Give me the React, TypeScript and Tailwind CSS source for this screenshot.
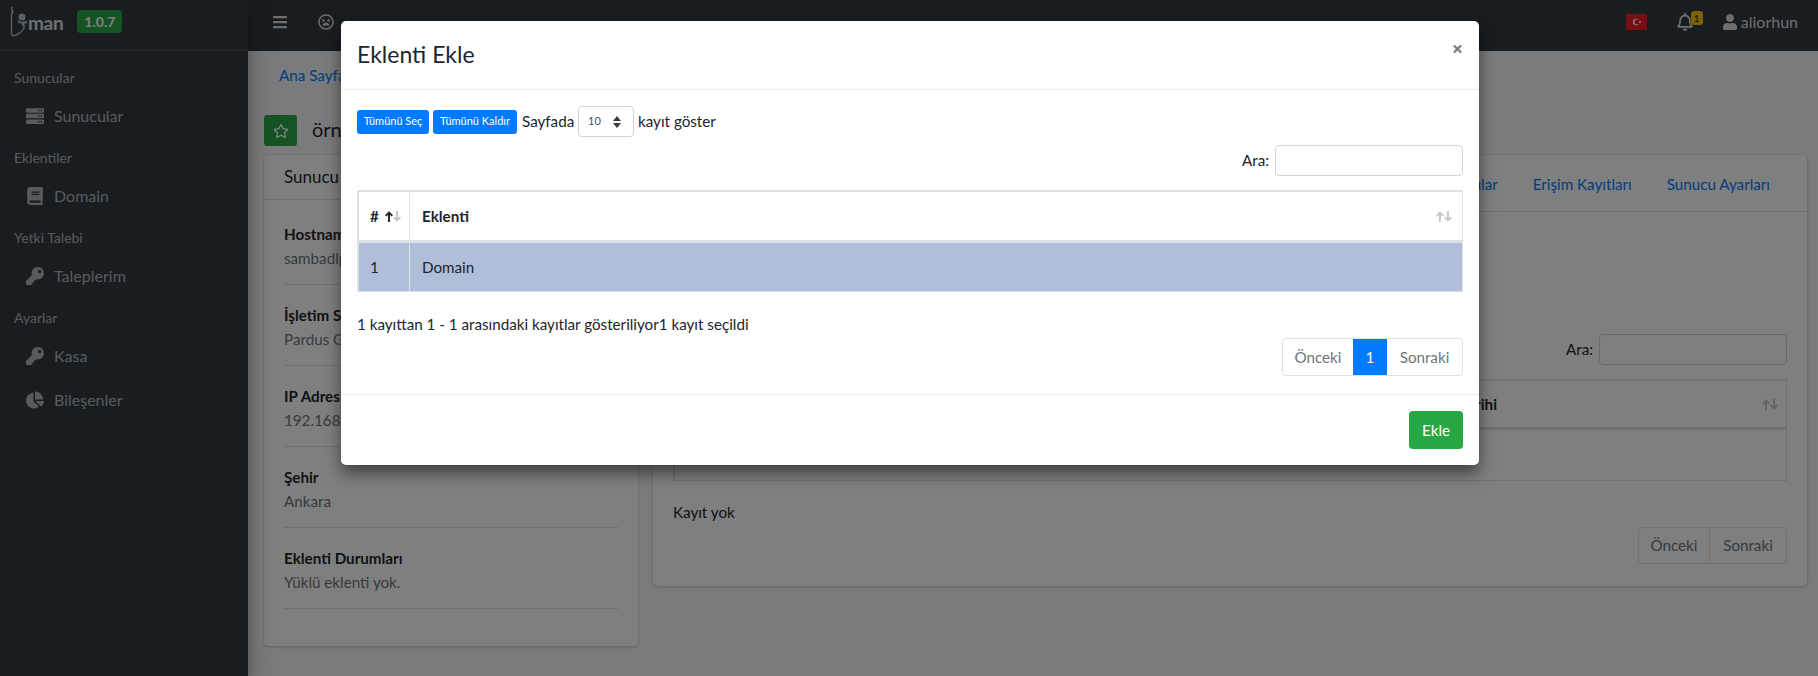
import { FaBars, FaBook, FaChartPie, FaKey, FaRegBell, FaRegStar, FaRegTired, FaServer, FaTimes, FaUser } from "react-icons/fa"
import type { ReactNode } from "react"

const infoRows = [
    { label: "Hostname", value: "sambadlp" },
    { label: "İşletim Sistemi", value: "Pardus GNU/Linux" },
    { label: "IP Adresi", value: "192.168.1.10" },
    { label: "Şehir", value: "Ankara" },
    { label: "Eklenti Durumları", value: "Yüklü eklenti yok." },
]

function SortArrows({ active }: { active?: boolean }) {
    return (
        <svg className="w-[16px] h-[11px] flex-none" viewBox="0 0 16 11" fill="none" strokeWidth="1.9">
            <path d="M4 11V1.500M0.700 4.800 4 1.500 7.300 4.800" stroke={active ? "#212529" : "#c4c6c8"} />
            <path d="M12 0v9.500M8.700 6.200 12 9.500l3.300-3.300" stroke="#c4c6c8" />
        </svg>
    )
}

function NavHeader({ children }: { children: ReactNode }) {
    return <div className="h-[38px] pl-[14px] flex items-center text-[14px] text-[#b0b5bd]">{children}</div>
}

function NavItem({ icon, children }: { icon: ReactNode; children: ReactNode }) {
    return (
        <div className="h-[40px] mb-[2px] pl-[26px] flex items-center text-[16px] text-[#b0b5bd]">
            <span className="w-[28px] text-[18px] flex-none">{icon}</span>
            {children}
        </div>
    )
}

function Pager({ children, width, current }: { children: ReactNode; width: string; current?: boolean }) {
    return (
        <span className={`${width} flex items-center justify-center ${current ? "bg-[#007bff] text-white" : "text-[#6c757d]"}`}>
            {children}
        </span>
    )
}

export default function App() {
    return (
        <div className="relative h-[676px] w-full overflow-hidden flex bg-[#f4f6f9] text-[15.2px] text-[#212529] font-['Lato','Noto_Sans',sans-serif]">
            <aside className="relative z-10 w-[248px] flex-none bg-[#343a40] shadow-[0_14px_28px_rgba(0,0,0,0.25),0_10px_10px_rgba(0,0,0,0.22)]">
                <div className="h-[51px] border-b border-[#4b545c] flex items-center">
                    <svg className="w-[30px] h-[50px] flex-none text-[#b8bcc0]" viewBox="0 0 30 50" fill="none" stroke="currentColor" strokeWidth="1.400">
                        <path d="M13 7c-2 1-2 4 0 4.500-1 1-1.500 2-1.500 3.500V34c0 1.500 1.500 2 3 1.500 5-1.500 8-4 10-8.500" />
                        <circle cx="22" cy="17" r="3.500" fill="currentColor" stroke="none" />
                        <path d="M18 21c2 2 6 2 9 1M22 22c1 2 2 3 2 5" strokeWidth="2" />
                    </svg>
                    <span className="ml-[-2px] mb-[4px] text-[19px] tracking-[-0.3px] font-bold text-[#e0e0e0]">man</span>
                    <span className="ml-[14px] mb-[7px] h-[23px] w-[45px] rounded-[4px] bg-[#28a745] flex items-center justify-center text-[14px] font-bold text-white">1.0.7</span>
                </div>
                <nav className="pt-[7px]">
                    <NavHeader>Sunucular</NavHeader>
                    <NavItem icon={<FaServer />}>Sunucular</NavItem>
                    <NavHeader>Eklentiler</NavHeader>
                    <NavItem icon={<FaBook />}>Domain</NavItem>
                    <NavHeader>Yetki Talebi</NavHeader>
                    <NavItem icon={<FaKey />}>Taleplerim</NavItem>
                    <NavHeader>Ayarlar</NavHeader>
                    <NavItem icon={<FaKey />}>Kasa</NavItem>
                    <div className="pt-[2px]">
                        <NavItem icon={<FaChartPie />}>Bileşenler</NavItem>
                    </div>
                </nav>
            </aside>

            <main className="flex-auto min-w-0 flex flex-col">
                <header className="h-[51px] pb-[8px] flex-none bg-[#343a40] flex items-center text-[#dcdcdc]">
                    <FaBars className="ml-[24px] w-[16px] h-[16px]" />
                    <FaRegTired className="ml-[30px] w-[16px] h-[16px]" />
                    <div className="ml-auto flex items-center">
                        <svg className="w-[21px] h-[16px]" viewBox="0 0 21 16">
                            <rect width="21" height="16" fill="#f01c24" />
                            <circle cx="10" cy="8" r="3.200" fill="#ffffff" />
                            <circle cx="11" cy="8" r="2.500" fill="#f01c24" />
                            <circle cx="14" cy="8" r="1" fill="#ffffff" />
                        </svg>
                        <div className="relative ml-[30px]">
                            <FaRegBell className="w-[16px] h-[18px]" />
                            <span className="absolute left-[14px] top-[-2px] w-[12px] h-[14px] rounded-[3px] bg-[#ffc107] text-[10px] leading-[14px] text-center text-[#212529]">1</span>
                        </div>
                        <FaUser className="ml-[30px] w-[14px] h-[16px]" />
                        <span className="ml-[4px] mr-[20px] text-[16px]">aliorhun</span>
                    </div>
                </header>

                <div className="flex-auto pl-[16px] pr-[11px]">
                    <div className="h-[49px] pl-[15px] pb-[1px] flex items-center text-[#007bff]">Ana Sayfa</div>
                    <div className="mt-[15px] h-[40px] flex items-start">
                        <span className="w-[33px] h-[31px] rounded-[3px] bg-[#28a745] text-white flex items-center justify-center text-[16px]">
                            <FaRegStar />
                        </span>
                        <span className="ml-[15px] text-[20px] leading-[28px]">örnek</span>
                    </div>
                    <div className="flex items-start gap-[15px]">
                        <section className="w-[374px] h-[491px] flex-none bg-white rounded-[4px] shadow-[0_0_1px_rgba(0,0,0,0.13),0_1px_3px_rgba(0,0,0,0.2)]">
                            <div className="h-[45px] pl-[20px] flex items-center border-b border-[#dfdfdf] text-[17px]">Sunucu Bilgileri</div>
                            <div className="px-[20px] pt-[4px]">
                                {infoRows.map((row) => (
                                    <div key={row.label} className="h-[81px] pt-[18px] border-b border-[#dfdfdf]">
                                        <div className="font-bold leading-[24px]">{row.label}</div>
                                        <div className="text-[#6c757d] leading-[24px]">{row.value}</div>
                                    </div>
                                ))}
                            </div>
                        </section>
                        <section className="flex-auto h-[431px] bg-white rounded-[4px] shadow-[0_0_1px_rgba(0,0,0,0.13),0_1px_3px_rgba(0,0,0,0.2)]">
                            <div className="h-[57px] pt-[3px] flex items-center justify-end gap-[35px] pr-[37px] border-b border-[#dfdfdf] text-[#007bff]">
                                <span>Kullanıcılar</span>
                                <span>Erişim Kayıtları</span>
                                <span>Sunucu Ayarları</span>
                            </div>
                            <div className="px-[20px]">
                                <div className="mt-[122px] flex justify-end items-center gap-[6px]">
                                    <span>Ara:</span>
                                    <span className="w-[188px] h-[31px] border border-[#ced4da] rounded-[4px]"></span>
                                </div>
                                <div className="mt-[14px] border-2 border-b border-r border-[#dee2e6]">
                                    <div className="h-[49px] border-b-[3px] border-[#dee2e6] flex items-center justify-between pr-[8px] font-bold">
                                        <span className="w-[822px] text-right">Tarihi</span>
                                        <SortArrows />
                                    </div>
                                    <div className="h-[50px]"></div>
                                </div>
                                <div className="mt-[19px] leading-[24px]">Kayıt yok</div>
                                <div className="mt-[3px] flex justify-end">
                                    <div className="h-[37px] flex border border-[#dee2e6] rounded-[4px] text-[#6c757d]">
                                        <span className="w-[71px] flex items-center justify-center border-r border-[#dee2e6]">Önceki</span>
                                        <span className="w-[76px] flex items-center justify-center">Sonraki</span>
                                    </div>
                                </div>
                            </div>
                        </section>
                    </div>
                </div>
            </main>

            <div className="absolute inset-0 z-20 bg-black/50"></div>

            <div className="absolute z-30 left-[341px] top-[21px] w-[1138px] bg-white rounded-[5px] shadow-[0_8px_16px_rgba(0,0,0,0.5)]">
                <div className="h-[69px] px-[16px] flex items-center justify-between border-b border-[#e9ecef]">
                    <span className="pb-[2px] text-[23px]">Eklenti Ekle</span>
                    <FaTimes className="mb-[12px] w-[11px] h-[12px] text-[#7f7f7f]" />
                </div>
                <div className="px-[16px]">
                    <div className="pt-[16px] flex items-center">
                        <span className="w-[72px] h-[24px] rounded-[3px] bg-[#007bff] text-white text-[11px] flex items-center justify-center">Tümünü Seç</span>
                        <span className="ml-[4px] w-[84px] h-[24px] rounded-[3px] bg-[#007bff] text-white text-[11px] flex items-center justify-center">Tümünü Kaldır</span>
                        <span className="ml-[5px] w-[52px] whitespace-nowrap">Sayfada</span>
                        <span className="ml-[4px] w-[56px] h-[31px] border border-[#ced4da] rounded-[4px] flex items-center justify-between pl-[9px] pr-[12px] text-[11px] text-[#495057]">
                            10
                            <svg className="w-[8px] h-[12px]" viewBox="0 0 8 12" fill="#343a40"><path d="M4 0 8 5H0zM4 12 0 7h8z" /></svg>
                        </span>
                        <span className="ml-[4px]">kayıt göster</span>
                    </div>
                    <div className="mt-[8px] flex justify-end items-center gap-[6px]">
                        <span>Ara:</span>
                        <span className="w-[188px] h-[31px] border border-[#ced4da] rounded-[4px]"></span>
                    </div>
                    <div className="mt-[14px] border-2 border-b border-r border-[#dee2e6]">
                        <div className="h-[51px] flex border-b-[3px] border-[#dee2e6] font-bold">
                            <div className="w-[51px] pl-[11px] flex items-center gap-[6px] border-r border-[#dee2e6]">
                                #
                                <SortArrows active />
                            </div>
                            <div className="flex-auto pl-[12px] pr-[10px] flex items-center justify-between">
                                Eklenti
                                <SortArrows />
                            </div>
                        </div>
                        <div className="h-[48px] flex bg-[#b0bed9]">
                            <div className="w-[51px] pl-[11px] flex items-center border-r border-[#dee2e6]">1</div>
                            <div className="pl-[12px] flex items-center">Domain</div>
                        </div>
                    </div>
                    <div className="mt-[20px] leading-[24px]">1 kayıttan 1 - 1 arasındaki kayıtlar gösteriliyor1 kayıt seçildi</div>
                    <div className="mt-[2px] flex justify-end">
                        <div className="h-[38px] flex border border-[#dee2e6] rounded-[4px]">
                            <Pager width="w-[70px]">Önceki</Pager>
                            <Pager width="w-[34px]" current>1</Pager>
                            <Pager width="w-[75px]">Sonraki</Pager>
                        </div>
                    </div>
                </div>
                <div className="mt-[18px] h-[71px] px-[16px] flex items-center justify-end border-t border-[#e9ecef]">
                    <span className="w-[54px] h-[38px] rounded-[4px] bg-[#28a745] text-white flex items-center justify-center">Ekle</span>
                </div>
            </div>
        </div>
    )
}
